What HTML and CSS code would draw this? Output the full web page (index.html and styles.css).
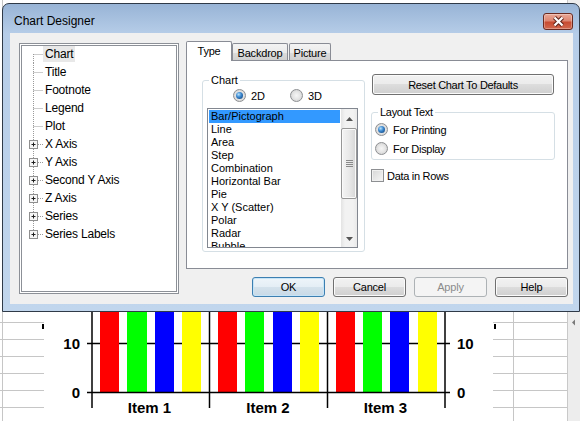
FILE: index.html
```html
<!DOCTYPE html>
<html>
<head>
<meta charset="utf-8">
<title>Chart Designer</title>
<link rel="stylesheet" href="styles.css">
</head>
<body>
<div class="desk">
  <svg class="sheet" width="580" height="421" viewBox="0 0 580 421">
    <rect width="580" height="421" fill="#fff"/>
    <g stroke="#c6c6c6" stroke-width="1">
      <line x1="2.5" y1="0" x2="2.5" y2="421"/>
      <line x1="0" y1="322.5" x2="44" y2="322.5"/>
      <line x1="0" y1="339.5" x2="44" y2="339.5"/>
      <line x1="0" y1="356.5" x2="44" y2="356.5"/>
      <line x1="0" y1="373.5" x2="44" y2="373.5"/>
      <line x1="0" y1="390.5" x2="44" y2="390.5"/>
      <line x1="0" y1="407.5" x2="44" y2="407.5"/>
      <line x1="513.5" y1="300" x2="513.5" y2="421"/>
      <line x1="493" y1="322.5" x2="567" y2="322.5"/>
      <line x1="493" y1="339.5" x2="567" y2="339.5"/>
      <line x1="493" y1="356.5" x2="567" y2="356.5"/>
      <line x1="493" y1="373.5" x2="567" y2="373.5"/>
      <line x1="493" y1="390.5" x2="567" y2="390.5"/>
      <line x1="493" y1="407.5" x2="567" y2="407.5"/>
    </g>
    <rect x="567" y="0" width="13" height="421" fill="#ededed"/>
    <line x1="567.5" y1="0" x2="567.5" y2="421" stroke="#c9c9c9"/>
    <path d="M575 319.5 L572 322.5 L575 325.5 Z" fill="#7a7a7a"/>
    <rect x="42" y="324" width="2" height="5" fill="#000"/>
    <rect x="494" y="324" width="2" height="5" fill="#000"/>

    <line x1="87" y1="343.5" x2="450" y2="343.5" stroke="#000" stroke-width="1.5"/>
    <g>
      <rect x="100" y="250" width="19" height="142" fill="#ff0000"/>
      <rect x="127" y="250" width="20" height="142" fill="#00ff00"/>
      <rect x="155" y="250" width="19" height="142" fill="#0000ff"/>
      <rect x="182" y="250" width="19" height="142" fill="#ffff00"/>
      <rect x="218" y="250" width="19" height="142" fill="#ff0000"/>
      <rect x="245" y="250" width="19" height="142" fill="#00ff00"/>
      <rect x="273" y="250" width="19" height="142" fill="#0000ff"/>
      <rect x="300" y="250" width="19" height="142" fill="#ffff00"/>
      <rect x="336" y="250" width="19" height="142" fill="#ff0000"/>
      <rect x="363" y="250" width="19" height="142" fill="#00ff00"/>
      <rect x="390" y="250" width="19" height="142" fill="#0000ff"/>
      <rect x="418" y="250" width="19" height="142" fill="#ffff00"/>
    </g>
    <g stroke="#000" stroke-width="1.5">
      <line x1="87" y1="392.5" x2="450" y2="392.5"/>
      <line x1="92" y1="250" x2="92" y2="408"/>
      <line x1="209.5" y1="250" x2="209.5" y2="408"/>
      <line x1="327.5" y1="250" x2="327.5" y2="408"/>
      <line x1="445" y1="250" x2="445" y2="408"/>
    </g>
    <g class="axis-text">
      <text x="80" y="348.5" text-anchor="end">10</text>
      <text x="80" y="397.7" text-anchor="end">0</text>
      <text x="457" y="348.5">10</text>
      <text x="457" y="397.7">0</text>
      <text x="149.5" y="413.3" text-anchor="middle">Item 1</text>
      <text x="268" y="413.3" text-anchor="middle">Item 2</text>
      <text x="385.5" y="413.3" text-anchor="middle">Item 3</text>
    </g>
  </svg>

  <div class="dialog">
    <div class="titlebar">
      <span class="title">Chart Designer</span>
      <span class="close">
        <svg width="13" height="11" viewBox="0 0 13 11">
          <path d="M2.5 1.5L10.5 9.5M10.5 1.5L2.5 9.5" stroke="#5e2218" stroke-width="4.2"/>
          <path d="M2.5 1.5L10.5 9.5M10.5 1.5L2.5 9.5" stroke="#fff" stroke-width="2.2"/>
        </svg>
      </span>
    </div>
    <div class="client">
      <div class="tree">
        <ul>
          <li class="sel"><svg width="21" height="18"><path d="M11.5 9V18M11.5 9.5H21" class="dot"/></svg><span>Chart</span></li>
          <li><svg width="21" height="18"><path d="M11.5 0V18M11.5 9.5H21" class="dot"/></svg><span>Title</span></li>
          <li><svg width="21" height="18"><path d="M11.5 0V18M11.5 9.5H21" class="dot"/></svg><span>Footnote</span></li>
          <li><svg width="21" height="18"><path d="M11.5 0V18M11.5 9.5H21" class="dot"/></svg><span>Legend</span></li>
          <li><svg width="21" height="18"><path d="M11.5 0V18M11.5 9.5H21" class="dot"/></svg><span>Plot</span></li>
          <li><svg width="21" height="18"><path d="M11.5 0V5M11.5 14V18M16 9.5H21" class="dot"/><rect x="7.5" y="5.5" width="8" height="8" class="pbox"/><path d="M9.5 9.5H13.5M11.5 7.5V11.5" class="plus"/></svg><span>X Axis</span></li>
          <li><svg width="21" height="18"><path d="M11.5 0V5M11.5 14V18M16 9.5H21" class="dot"/><rect x="7.5" y="5.5" width="8" height="8" class="pbox"/><path d="M9.5 9.5H13.5M11.5 7.5V11.5" class="plus"/></svg><span>Y Axis</span></li>
          <li><svg width="21" height="18"><path d="M11.5 0V5M11.5 14V18M16 9.5H21" class="dot"/><rect x="7.5" y="5.5" width="8" height="8" class="pbox"/><path d="M9.5 9.5H13.5M11.5 7.5V11.5" class="plus"/></svg><span>Second Y Axis</span></li>
          <li><svg width="21" height="18"><path d="M11.5 0V5M11.5 14V18M16 9.5H21" class="dot"/><rect x="7.5" y="5.5" width="8" height="8" class="pbox"/><path d="M9.5 9.5H13.5M11.5 7.5V11.5" class="plus"/></svg><span>Z Axis</span></li>
          <li><svg width="21" height="18"><path d="M11.5 0V5M11.5 14V18M16 9.5H21" class="dot"/><rect x="7.5" y="5.5" width="8" height="8" class="pbox"/><path d="M9.5 9.5H13.5M11.5 7.5V11.5" class="plus"/></svg><span>Series</span></li>
          <li><svg width="21" height="18"><path d="M11.5 0V5M16 9.5H21" class="dot"/><rect x="7.5" y="5.5" width="8" height="8" class="pbox"/><path d="M9.5 9.5H13.5M11.5 7.5V11.5" class="plus"/></svg><span>Series Labels</span></li>
        </ul>
      </div>

      <div class="main">
        <div class="tabs">
          <span class="tab sel type">Type</span>
          <span class="tab backdrop">Backdrop</span>
          <span class="tab picture">Picture</span>
        </div>
        <div class="panel">
          <fieldset class="grp chartgrp">
            <legend>Chart</legend>
            <div class="radios">
              <span class="opt first"><span class="radio on"></span>2D</span>
              <span class="opt"><span class="radio"></span>3D</span>
            </div>
            <div class="listbox">
              <ul class="items">
                <li class="sel">Bar/Pictograph</li>
                <li>Line</li>
                <li>Area</li>
                <li>Step</li>
                <li>Combination</li>
                <li>Horizontal Bar</li>
                <li>Pie</li>
                <li>X Y (Scatter)</li>
                <li>Polar</li>
                <li>Radar</li>
                <li>Bubble</li>
              </ul>
              <div class="vscroll">
                <span class="arrow up"><svg width="7" height="4"><path d="M0 4L3.5 0L7 4Z" fill="#555"/></svg></span>
                <span class="thumb"><svg width="7" height="7"><path d="M0 0.5H7M0 2.5H7M0 4.5H7M0 6.5H7" stroke="#8a8a8a"/></svg></span>
                <span class="fill"></span>
                <span class="arrow down"><svg width="7" height="4"><path d="M0 0L3.5 4L7 0Z" fill="#555"/></svg></span>
              </div>
            </div>
          </fieldset>
          <div class="side">
            <button class="btn reset">Reset Chart To Defaults</button>
            <fieldset class="grp layout">
              <legend>Layout Text</legend>
              <span class="opt"><span class="radio on"></span>For Printing</span>
              <span class="opt"><span class="radio"></span>For Display</span>
            </fieldset>
            <span class="chk"><span class="box"></span>Data in Rows</span>
          </div>
        </div>
        <div class="buttons">
          <button class="btn def">OK</button>
          <button class="btn">Cancel</button>
          <button class="btn dis">Apply</button>
          <button class="btn">Help</button>
        </div>
      </div>
    </div>
  </div>
</div>
</body>
</html>
```

FILE: styles.css
```css
* { box-sizing: border-box; }
html, body { margin: 0; padding: 0; }
body {
  background: #fff;
  font-family: "Liberation Sans", Arial, sans-serif;
  font-size: 11px;
  color: #000;
}
.desk { position: relative; width: 580px; height: 421px; overflow: hidden; }
.sheet { display: block; }
.axis-text text {
  font-family: "Liberation Sans", Arial, sans-serif;
  font-weight: bold;
  font-size: 15px;
  fill: #000;
}

.dialog {
  position: absolute;
  left: 2px;
  top: 3px;
  width: 578px;
  height: 309px;
  border: 1px solid #2f3a48;
  border-radius: 7px 7px 0 0;
  background: linear-gradient(#98b4d6 0, #b6cde8 30px, #c1d6ed 100%);
  padding: 0 6px 7px 7px;
  display: flex;
  flex-direction: column;
}
.titlebar {
  height: 29px;
  padding: 9px 0 3px 4px;
  display: flex;
  align-items: center;
  flex: none;
}
.title { font-size: 12px; line-height: 17px; }
.close {
  margin-left: auto;
  width: 30px;
  height: 17px;
  border: 1px solid #6b2a20;
  border-radius: 3px;
  background: linear-gradient(#eaa897 0%, #dd8671 45%, #c84b31 55%, #d2694f 100%);
  box-shadow: inset 0 0 0 1px rgba(255, 255, 255, .3);
  display: flex;
  align-items: center;
  justify-content: center;
}
.close svg { display: block; }

.client {
  flex: 1;
  background: #f0f0f0;
  display: flex;
  gap: 7px;
  padding: 8px 5px 0 9px;
}

/* tree */
.tree {
  width: 160px;
  height: 251px;
  margin-top: 2px;
  flex: none;
  background: #fff;
  border: 3px double #8c9097;
  font-size: 12px;
  letter-spacing: -0.2px;
  overflow: hidden;
}
.tree ul { list-style: none; margin: -1px 0 0; padding: 0; }
.tree li { display: flex; align-items: center; height: 18px; }
.tree li svg { display: block; flex: none; }
.tree li span { line-height: 16px; padding: 0 2px; white-space: nowrap; }
.tree li.sel span { background: #e8e8e8; }
.tree .dot { stroke: #9a9a9a; stroke-width: 1; stroke-dasharray: 1 1; fill: none; }
.tree .pbox { fill: #f6f6f6; stroke: #8f8f8f; }
.tree .plus { stroke: #1e1e1e; stroke-width: 1; }

/* tabs */
.main { width: 382px; display: flex; flex-direction: column; }
.tabs { display: flex; align-items: flex-end; height: 20px; letter-spacing: -0.2px; flex: none; }
.tab {
  height: 18px;
  border: 1px solid #898c95;
  border-bottom: 0;
  border-radius: 2px 2px 0 0;
  background: linear-gradient(#f3f3f3, #ebebeb 50%, #dcdcdc 50%, #cfcfcf);
  display: flex;
  align-items: center;
  justify-content: center;
}
.tab.sel { height: 20px; background: #fff; position: relative; z-index: 2; padding-bottom: 1px; }
.tab.type { width: 46px; }
.tab.backdrop { width: 56px; }
.tab.picture { width: 42px; margin-left: 1px; }

.panel {
  position: relative;
  z-index: 1;
  margin-top: -1px;
  height: 209px;
  border: 1px solid #898c95;
  background: #fff;
  display: flex;
  align-items: flex-start;
  padding: 13px 0 0 15px;
  flex: none;
}

fieldset.grp {
  margin: 0;
  border: 1px solid #d5dfe5;
  border-radius: 3px;
  min-width: 0;
}
fieldset.grp legend { padding: 0 2px; line-height: 13px; }

fieldset.chartgrp { width: 163px; height: 178px; padding: 0 6px 0 4px; flex: none; }
fieldset.chartgrp legend { margin-left: 2px; }

.radios { display: flex; align-items: center; height: 13px; margin-top: 2px; padding-left: 26px; }
.opt { display: flex; align-items: center; gap: 5px; white-space: nowrap; }
.radios .first { width: 57px; }

.radio {
  width: 13px;
  height: 13px;
  border-radius: 50%;
  border: 1px solid #8d8f92;
  background: radial-gradient(circle at 50% 50%, #f6f6f6 0, #e6e6e6 45%, #c9c9c9 100%);
  display: inline-flex;
  align-items: center;
  justify-content: center;
  flex: none;
}
.radio.on::after {
  content: "";
  width: 7px;
  height: 7px;
  border-radius: 50%;
  background: radial-gradient(circle at 38% 35%, #b8e3fb 0, #3f8bd2 40%, #124a86 85%);
}

.listbox {
  margin-top: 6px;
  width: 151px;
  height: 140px;
  border: 1px solid #828790;
  display: flex;
  background: #fff;
}
.items { flex: 1; list-style: none; margin: 0; padding: 1px; overflow: hidden; }
.items li { height: 13px; line-height: 13px; padding-left: 2px; white-space: nowrap; }
.items li.sel { background: #3399ff; }

.vscroll {
  width: 16px;
  flex: none;
  display: flex;
  flex-direction: column;
  background: linear-gradient(to right, #e3e3e3, #f2f2f2 25%, #f2f2f2 75%, #e9e9e9);
}
.arrow { height: 17px; display: flex; align-items: center; justify-content: center; flex: none; }
.arrow svg { display: block; }
.arrow.up { padding-top: 3px; }
.thumb {
  margin-top: 2px;
  height: 71px;
  flex: none;
  border: 1px solid #979797;
  border-radius: 2px;
  background: linear-gradient(to right, #f4f4f4, #e9e9e9 50%, #d6d6d6);
  box-shadow: inset 0 0 0 1px #fafafa;
  display: flex;
  align-items: center;
  justify-content: center;
}
.thumb svg { display: block; }
.vscroll .fill { flex: 1; }

.side { margin-left: 6px; width: 184px; display: flex; flex-direction: column; letter-spacing: -0.3px; flex: none; }
.side .reset { margin-left: 1px; width: 182px; height: 21px; }
fieldset.layout { margin-top: 11px; width: 184px; height: 54px; padding: 1px 0 0 3px; }
fieldset.layout legend { margin-left: 3px; }
.layout .opt { height: 19px; }
.chk { margin-top: 9px; display: flex; align-items: center; gap: 3px; height: 13px; }
.box {
  width: 13px;
  height: 13px;
  border: 1px solid #8d8f92;
  background: linear-gradient(135deg, #d6d6d6, #f7f7f7);
  box-shadow: inset 0 0 0 1px #f0f0f0;
  flex: none;
}

.buttons { margin-top: 8px; display: flex; justify-content: flex-end; gap: 8px; flex: none; }
.btn {
  width: 73px;
  height: 20px;
  padding: 0;
  font: inherit;
  letter-spacing: -0.2px;
  color: #000;
  border: 1px solid #707070;
  border-radius: 3px;
  background: linear-gradient(#f2f2f2 0%, #ebebeb 50%, #dddddd 50%, #cfcfcf 100%);
  box-shadow: inset 0 0 0 1px #fbfbfb;
}
.side .btn { letter-spacing: -0.3px; }
.btn.def {
  border-color: #3c7fb1;
  background: linear-gradient(#eef5fa 0%, #e4eef5 50%, #d4e2ec 50%, #c8d9e6 100%);
  box-shadow: inset 0 0 0 1px #c6e4f7;
}
.btn.dis {
  border-color: #adb2b5;
  background: #f4f4f4;
  box-shadow: none;
  color: #8b8b8b;
}
```
